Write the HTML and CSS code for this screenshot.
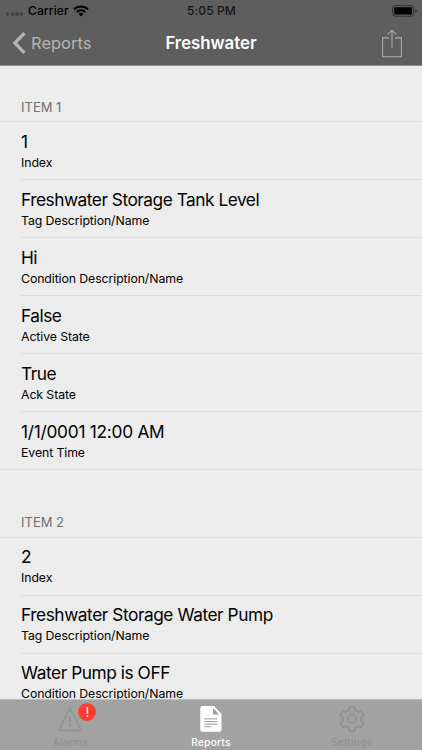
FILE: index.html
```html
<!DOCTYPE html>
<html lang="en">
<head>
<meta charset="utf-8">
<title>Freshwater</title>
<link rel="stylesheet" href="styles.css">
</head>
<body>
<div class="screen">
  <header class="top">
    <div class="status">
      <div class="carrier">
        <span class="dots"><i></i><i></i><i></i><i></i></span>
        <span class="carrier-name">Carrier</span>
        <svg class="wifi" width="16" height="12" viewBox="0 0 16 12">
          <g fill="none" stroke="#000" stroke-width="2"><path d="M1 4.4A10 10 0 0 1 15 4.4"/><path d="M3.6 7.1A6.2 6.2 0 0 1 12.4 7.1"/></g>
          <path d="M8 11.5L5.6 9A3.5 3.5 0 0 1 10.400 9Z"/>
        </svg>
      </div>
      <span class="time">5:05 PM</span>
      <svg class="battery" width="26" height="12" viewBox="0 0 26 12">
        <rect x=".6" y=".6" width="21" height="10.600" rx="2.600" fill="none" stroke="#303030" stroke-width="1"/>
        <rect x="2.200" y="2.200" width="17.800" height="7.400" rx="1"/>
        <path d="M23.200 4v4q1.600-.7 1.600-2t-1.600-2z" fill="#303030"/>
      </svg>
    </div>
    <nav class="nav">
      <div class="back">
        <svg width="13" height="22" viewBox="0 0 13 22"><path d="M11.500 1.200L1.800 11l9.700 9.800" fill="none" stroke="#b4b4b4" stroke-width="3.200"/></svg>
        <span>Reports</span>
      </div>
      <h1>Freshwater</h1>
      <svg class="share" width="20" height="29" viewBox="0 0 20 29"><g fill="none" stroke="#aaa" stroke-width="1.100"><path d="M7.200 8.900H.6v18.800h18.800V8.900h-6.600M10 18.500V1.200M5.700 5.500L10 1.200l4.300 4.300"/></g></svg>
    </nav>
  </header>

  <main class="list">
    <h2>ITEM 1</h2>
    <section class="group">
      <div class="row"><b>1</b><span>Index</span></div>
      <div class="row"><b>Freshwater Storage Tank Level</b><span>Tag Description/Name</span></div>
      <div class="row"><b>Hi</b><span>Condition Description/Name</span></div>
      <div class="row"><b>False</b><span>Active State</span></div>
      <div class="row"><b>True</b><span>Ack State</span></div>
      <div class="row date"><b>1/1/0001 12:00 AM</b><span>Event Time</span></div>
    </section>
    <h2 class="next">ITEM 2</h2>
    <section class="group second">
      <div class="row"><b>2</b><span>Index</span></div>
      <div class="row"><b>Freshwater Storage Water Pump</b><span>Tag Description/Name</span></div>
      <div class="row"><b>Water Pump is OFF</b><span>Condition Description/Name</span></div>
    </section>
  </main>

  <footer class="tabs">
    <div class="tab">
      <div class="icon">
        <svg width="26" height="26" viewBox="0 0 26 26"><path d="M13 2L24.200 24.500H1.800Z" fill="none" stroke="#919191" stroke-width="1.500"/><path d="M13 10.500v5.500M13 18v2.500" stroke="#919191" stroke-width="2.200"/></svg>
        <span class="badge">!</span>
      </div>
      <span>Alarms</span>
    </div>
    <div class="tab active">
      <div class="icon">
        <svg width="22" height="26" viewBox="0 0 22 26"><path d="M2.500 0H14l7.500 8v15.500a2.200 2.200 0 0 1-2.200 2.200H2.500A2.200 2.200 0 0 1 .3 23.500V2.200A2.200 2.200 0 0 1 2.500 0z" fill="#fff"/><path d="M13 2v6.400h6.200z" fill="#9b9b9b"/><path d="M4.300 12.900h13M4.300 15.600h13M4.300 18.200h13M4.300 20.700h7" stroke="#999" stroke-width="1"/></svg>
      </div>
      <span>Reports</span>
    </div>
    <div class="tab">
      <div class="icon">
        <svg width="26" height="26" viewBox="-13 -13 26 26"><g fill="none" stroke="#919191" stroke-width="1.500" stroke-linejoin="round"><path d="M-2.870-8.840L-2.580-12.130H2.580L2.870-8.840Q4.700-8.200 6.220-6.910L9.210-8.300L11.790-3.830L9.100-1.930Q9.500 0 9.100 1.930L11.790 3.830L9.210 8.300L6.220 6.910Q4.700 8.200 2.870 8.840L2.580 12.130H-2.580L-2.870 8.840Q-4.700 8.200-6.220 6.910L-9.210 8.300L-11.790 3.830L-9.100 1.930Q-9.500 0-9.100-1.930L-11.790-3.830L-9.210-8.300L-6.220-6.910Q-4.700-8.200-2.870-8.840Z"/><circle r="4.300"/></g></svg>
      </div>
      <span>Settings</span>
    </div>
  </footer>
</div>
</body>
</html>
```
FILE: styles.css
```css
* { box-sizing: border-box; }
body { margin: 0; font-family: Inter, "Liberation Sans", sans-serif; color: #000; }
svg { display: block; }
.screen { width: 422px; height: 750px; display: flex; flex-direction: column; overflow: hidden; background: #ececec; }

.top { height: 66px; flex: none; background: #5e5e5e; border-bottom: 1px solid #919191; }
.status { height: 21px; display: grid; grid-template-columns: 1fr auto 1fr; align-items: center; padding: 0 5px 0 6px; font-size: 12px; font-weight: 500; letter-spacing: .12px; }
.carrier { display: flex; align-items: center; }
.dots { display: flex; gap: 1.500px; width: 22px; padding-top: 7px; }
.dots i { width: 3.200px; height: 3.200px; border-radius: 50%; background: #444; }
.carrier-name { width: 45px; }
.time { color: #151515; }
.battery { justify-self: end; margin-right: -1px; }
.nav { height: 44px; display: grid; grid-template-columns: 1fr auto 1fr; align-items: center; padding: 0 20px 0 13px; }
.back { display: flex; align-items: center; gap: 5px; font-size: 16.500px; color: #b4b4b4; }
h1 { margin: 0 0 0 7px; font-size: 16.800px; font-weight: 600; color: #fff; }
.share { justify-self: end; }

.list { flex: 1; min-height: 0; overflow: hidden; }
h2 { margin: 0; height: 55px; padding: 33px 21px 0; font-size: 13px; line-height: 16px; font-weight: 400; color: #707072; }
h2.next { height: 67px; padding-top: 44px; }
.group { border-top: 1px solid #dcdcdf; border-bottom: 1px solid #dcdcdf; }
.row { height: 58px; margin-left: 21px; padding-top: 9px; display: flex; flex-direction: column; border-bottom: 1px solid #dcdcdf; }
.second .row { padding-top: 8px; }
.row:last-child { height: 57px; border-bottom: 0; }
.row b { font-size: 17.300px; line-height: 22px; font-weight: 400; letter-spacing: -.48px; }
.row.date b { letter-spacing: -.26px; }
.second .row b { letter-spacing: -.44px; }
.row span { font-size: 12.300px; line-height: 19px; letter-spacing: -.09px; }

.tabs { height: 51px; flex: none; display: grid; grid-template-columns: repeat(3, 1fr); background: #a2a2a2; border-top: 1px solid #bdbdbd; }
.tab { display: flex; flex-direction: column; align-items: center; gap: 3px; padding-top: 6px; font-size: 10px; line-height: 14px; font-weight: 500; letter-spacing: .3px; color: #919191; }
.tab.active { color: #fff; }
.icon { position: relative; }
.badge { position: absolute; left: 21px; top: -3px; width: 18px; height: 18px; border-radius: 50%; background: #fc3d30; color: #fff; font-size: 13px; line-height: 18px; font-weight: 400; letter-spacing: 0; text-align: center; }
```
